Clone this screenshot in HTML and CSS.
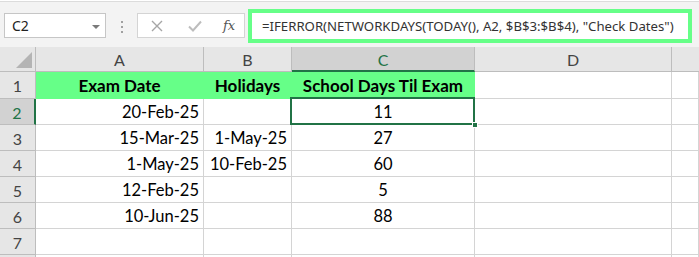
FILE: index.html
```html
<!DOCTYPE html>
<html lang="en">
<head>
    <meta charset="UTF-8">
    <meta name="viewport" content="width=device-width, initial-scale=1.0">
    <title>School Days Til Exam</title>
    <link rel="stylesheet" href="styles.css">
</head>
<body>
    <div class="toolbar">
        <div class="name-box">
            <span>C2</span>
            <span class="caret"></span>
        </div>
        <div class="grip"><i></i><i></i><i></i></div>
        <div class="fx-buttons">
            <svg class="btn-icon" width="12" height="12" viewBox="0 0 12 12"><path d="M1 1L11 11M11 1L1 11" stroke="#a6a6a6" stroke-width="1.4" fill="none"/></svg>
            <svg class="btn-icon" width="14" height="12" viewBox="0 0 14 12"><path d="M1 6.5L5 10.5L13 1.5" stroke="#bdbdbd" stroke-width="2" fill="none"/></svg>
            <span class="fx">fx</span>
        </div>
        <div class="formula">=IFERROR(NETWORKDAYS(TODAY(), A2, $B$3:$B$4), "Check Dates")</div>
    </div>

    <div class="sheet">
        <div class="cell corner"><span class="tri"></span></div>
        <div class="cell col-head">A</div>
        <div class="cell col-head">B</div>
        <div class="cell col-head active">C</div>
        <div class="cell col-head">D</div>
        <div class="cell col-head last"></div>

        <div class="cell row-head">1</div>
        <div class="cell title">Exam Date</div>
        <div class="cell title">Holidays</div>
        <div class="cell title">School Days Til Exam</div>
        <div class="cell"></div>
        <div class="cell"></div>

        <div class="cell row-head active">2</div>
        <div class="cell date">20-Feb-25</div>
        <div class="cell date"></div>
        <div class="cell num selected">11<span class="handle"></span></div>
        <div class="cell"></div>
        <div class="cell"></div>

        <div class="cell row-head">3</div>
        <div class="cell date">15-Mar-25</div>
        <div class="cell date">1-May-25</div>
        <div class="cell num">27</div>
        <div class="cell"></div>
        <div class="cell"></div>

        <div class="cell row-head">4</div>
        <div class="cell date">1-May-25</div>
        <div class="cell date">10-Feb-25</div>
        <div class="cell num">60</div>
        <div class="cell"></div>
        <div class="cell"></div>

        <div class="cell row-head">5</div>
        <div class="cell date">12-Feb-25</div>
        <div class="cell date"></div>
        <div class="cell num">5</div>
        <div class="cell"></div>
        <div class="cell"></div>

        <div class="cell row-head">6</div>
        <div class="cell date">10-Jun-25</div>
        <div class="cell date"></div>
        <div class="cell num">88</div>
        <div class="cell"></div>
        <div class="cell"></div>

        <div class="cell row-head">7</div>
        <div class="cell"></div>
        <div class="cell"></div>
        <div class="cell"></div>
        <div class="cell"></div>
        <div class="cell"></div>

        <div class="cell row-head stub"></div>
        <div class="cell stub"></div>
        <div class="cell stub"></div>
        <div class="cell stub"></div>
        <div class="cell stub"></div>
        <div class="cell stub"></div>
    </div>
</body>
</html>
```

FILE: styles.css
```css
* {
    box-sizing: border-box;
}
body {
    margin: 0;
    width: 699px;
    height: 257px;
    overflow: hidden;
    background: #fff;
    font-family: Lato, "Liberation Sans", sans-serif;
    color: #000;
}
.toolbar {
    height: 46px;
    background: #f3f3f3;
    border-top: 1px solid #dcdcdc;
    margin-top: 1px;
    display: flex;
    align-items: flex-start;
    padding-left: 4px;
}
.name-box {
    margin-top: 11px;
    width: 102px;
    height: 25px;
    background: #fff;
    border: 1px solid #c6c6c6;
    display: flex;
    align-items: center;
    justify-content: space-between;
    padding: 0 5px 0 7px;
    font-family: "Noto Sans", sans-serif;
    font-size: 14px;
    color: #222;
}
.caret {
    width: 0;
    height: 0;
    border-left: 4px solid transparent;
    border-right: 4px solid transparent;
    border-top: 4px solid #7a7a7a;
    margin-top: 2px;
}
.grip {
    width: 31px;
    margin-top: 19px;
    display: flex;
    flex-direction: column;
    align-items: center;
    gap: 3px;
}
.grip i {
    width: 2px;
    height: 2px;
    background: #a0a0a0;
}
.fx-buttons {
    margin-top: 11px;
    width: 108px;
    height: 25px;
    background: #fff;
    border: 1px solid #d4d4d4;
    display: flex;
    align-items: center;
    padding-left: 13px;
}
.btn-icon + .btn-icon {
    margin-left: 25px;
}
.fx {
    margin-left: 21px;
    font-family: "DejaVu Serif", serif;
    font-style: italic;
    font-size: 13px;
    color: #555;
}
.formula {
    margin-left: 3px;
    margin-top: 7px;
    width: 444px;
    height: 34px;
    background: #fff;
    border: 4px solid #66ff88;
    padding-left: 10px;
    display: flex;
    align-items: center;
    font-family: "Noto Sans", sans-serif;
    font-size: 13.2px;
    color: #333;
    white-space: nowrap;
}
.sheet {
    display: grid;
    grid-template-columns: 36px 168px 88px 183px 197px 1fr;
    grid-template-rows: 25px 27px repeat(6, 26px) 2px;
}
.cell {
    border-right: 1px solid #d4d4d4;
    border-bottom: 1px solid #d4d4d4;
    display: flex;
    align-items: center;
    font-size: 16.5px;
    padding-top: 1px;
}
.cell.stub {
    border-bottom: none;
    padding: 0;
}
.corner {
    background: #e6e6e6;
    border-color: #bdbdbd;
    position: relative;
}
.tri {
    position: absolute;
    right: 3px;
    bottom: 3px;
    width: 0;
    height: 0;
    border-left: 16px solid transparent;
    border-bottom: 16px solid #b4b4b4;
}
.col-head {
    background: #e6e6e6;
    border-color: #bdbdbd;
    justify-content: center;
    color: #444;
    font-size: 16px;
}
.col-head.last {
    border-right: none;
}
.col-head.active {
    background: #d2d2d2;
    border-bottom: 2px solid #217346;
    color: #217346;
}
.row-head {
    background: #e6e6e6;
    border-color: #bdbdbd;
    justify-content: center;
    color: #444;
    font-size: 16px;
}
.row-head.active {
    background: #d2d2d2;
    border-right: 2px solid #217346;
    color: #217346;
}
.title {
    background: #66ff88;
    border-color: #66ff88;
    justify-content: center;
    font-weight: 700;
    font-size: 17px;
}
.date {
    justify-content: flex-end;
    padding-right: 4px;
}
.num {
    justify-content: center;
}
.selected {
    position: relative;
}
.selected::after {
    content: "";
    position: absolute;
    left: -2px;
    top: -2px;
    right: -1px;
    bottom: -1px;
    border: 2px solid #217346;
}
.handle {
    position: absolute;
    right: -4px;
    bottom: -4px;
    width: 6px;
    height: 6px;
    background: #217346;
    border: 1px solid #fff;
    z-index: 1;
}
```
